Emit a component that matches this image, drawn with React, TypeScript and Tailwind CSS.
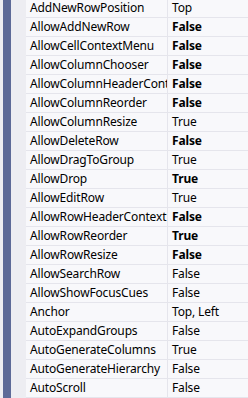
const rows: [string, string, boolean][] = [
  ['AddNewRowPosition', 'Top', false],
  ['AllowAddNewRow', 'False', true],
  ['AllowCellContextMenu', 'False', true],
  ['AllowColumnChooser', 'False', true],
  ['AllowColumnHeaderContextMenu', 'False', true],
  ['AllowColumnReorder', 'False', true],
  ['AllowColumnResize', 'True', false],
  ['AllowDeleteRow', 'False', true],
  ['AllowDragToGroup', 'True', false],
  ['AllowDrop', 'True', true],
  ['AllowEditRow', 'True', false],
  ['AllowRowHeaderContextMenu', 'False', true],
  ['AllowRowReorder', 'True', true],
  ['AllowRowResize', 'False', true],
  ['AllowSearchRow', 'False', false],
  ['AllowShowFocusCues', 'False', false],
  ['Anchor', 'Top, Left', false],
  ['AutoExpandGroups', 'False', false],
  ['AutoGenerateColumns', 'True', false],
  ['AutoGenerateHierarchy', 'False', false],
  ['AutoScroll', 'False', false],
]

export default function App() {
  return (
    <div className="flex w-[248px] h-[398px] overflow-hidden bg-[#f0f0f5] font-['Noto_Sans',sans-serif] text-[12px] tracking-[-0.15px] text-black">
      <div className="w-[3px] shrink-0 bg-[#eeeef3]" />
      <div className="w-[8px] shrink-0 bg-[#5d6a98]" />
      <div className="w-[15px] shrink-0 bg-[#ededf2]" />
      <div className="flex-1 -mt-px bg-[#f8f8fb]">
        {rows.map(([name, value, bold]) => (
          <div key={name} className="flex h-[19px] border-b border-[#e5e5ec]">
            <div className="w-[142px] shrink-0 border-r border-[#e5e5ec] pl-[4px] leading-[18px] whitespace-nowrap overflow-hidden">
              {name}
            </div>
            <div className={`flex-1 pl-[4px] leading-[18px] whitespace-nowrap overflow-hidden ${bold ? 'font-bold' : ''}`}>
              {value}
            </div>
          </div>
        ))}
      </div>
    </div>
  )
}
